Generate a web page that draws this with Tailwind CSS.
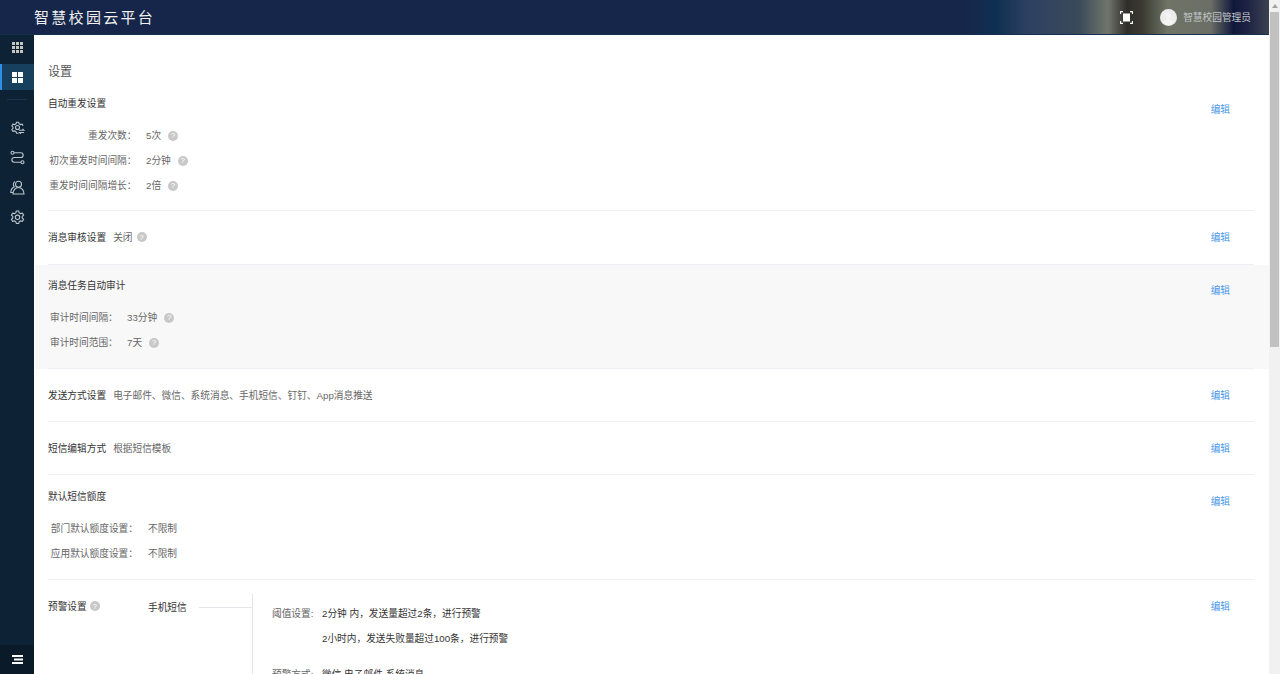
<!DOCTYPE html>
<html lang="zh">
<head>
<meta charset="utf-8">
<script src="https://cdn.jsdelivr.net/npm/@tailwindcss/browser@4"></script>
</head>
<body class="h-[674px] w-[1280px] overflow-hidden bg-white font-['Liberation_Sans','Noto_Sans_CJK_SC',sans-serif] text-[9.7px] leading-[15px] whitespace-nowrap text-[#666]">
<div class="flex h-[674px]">
  <div class="flex w-[1269px] shrink-0 flex-col">
    <header class="flex h-[35px] shrink-0 items-center justify-between border-b border-[#14304f] bg-[linear-gradient(90deg,#16264a_0%,#16264a_76%,#0e3050_78.5%,#2d4062_81%,#3a4a5a_85%,#70756a_87.3%,#302e2a_88.8%,#3a3a30_90%,#6f7466_92%,#6a6e66_95.4%,#10183a_97.2%,#1d2344_98.3%,#3a4250_100%)] pl-[34px] pr-[18px]">
      <div class="text-[15px] leading-[35px] tracking-[2.3px] text-[#f0f0f0]">智慧校园云平台</div>
      <div class="flex items-center">
        <svg class="mr-[27px] h-[13px] w-[13px]" viewBox="0 0 13 13" fill="none" stroke="#fff" stroke-width="1.1"><path d="M.6 3V.6H3M10 .6h2.4V3M12.400 10v2.400H10M3 12.400H.6V10"/><rect x="3" y="2.500" width="7" height="8" fill="#fff" stroke="none"/></svg>
        <svg class="mr-[6px] h-[17px] w-[17px]" viewBox="0 0 17 17"><circle cx="8.500" cy="8.500" r="8.500" fill="#ececec"/><circle cx="8.500" cy="6.800" r="2.800" fill="#f4f4f4"/><path d="M3.500 14c.6-3 2.500-4 5-4s4.400 1 5 4a8 8 0 01-10 0z" fill="#f4f4f4"/></svg>
        <span class="text-[#c2c5c8]">智慧校园管理员</span>
      </div>
    </header>
    <div class="flex min-h-0 flex-1">
      <aside class="flex w-[34px] shrink-0 flex-col bg-[#0e2235]">
        <div class="flex h-[24px] items-center justify-center">
          <svg class="h-[11px] w-[11px]" viewBox="0 0 11 11" fill="#c4c6bf"><path d="M0 0h3v3H0zM4 0h3v3H4zM8 0h3v3H8zM0 4h3v3H0zM4 4h3v3H4zM8 4h3v3H8zM0 8h3v3H0zM4 8h3v3H4zM8 8h3v3H8z"/></svg>
        </div>
        <div class="mt-[5px] flex h-[26px] items-center justify-center border-l-2 border-[#2f8fe6] bg-[#17405f] pr-[2px]">
          <svg class="h-[11px] w-[11px]" viewBox="0 0 11 11" fill="#fff"><path d="M0 0h5v5H0zM6 0h5v5H6zM0 6h5v5H0zM6 6h5v5H6z"/></svg>
        </div>
        <div class="mx-[7px] mb-[20px] mt-[9px] h-px bg-[#1d3347]"></div>
        <div class="flex flex-col items-center gap-[15px] text-[#b9c4cb]">
          <svg class="h-[15px] w-[15px]" viewBox="0 0 15 15" fill="none" stroke="currentColor" stroke-width="1.1"><path d="M8.500 13.200H6.600l-.6-1.500-1.500-.8-1.600.4-1-1.700 1.100-1.200V7.100L1.900 5.900l1-1.700 1.600.4L6 3.800l.6-1.500h2l.6 1.500 1.400.8 1.600-.4.900 1.500"/><circle cx="7.500" cy="7.500" r="2"/><path d="M9 10.200h5l-1.500-1.400M14 12.500H9.500l1.500 1.400"/></svg>
          <svg class="h-[15px] w-[15px]" viewBox="0 0 15 15" fill="none" stroke="currentColor" stroke-width="1.1"><circle cx="2.500" cy="2.800" r="1.500"/><circle cx="12.500" cy="12.200" r="1.500"/><path d="M4 2.800h6.800a2.350 2.350 0 010 4.700H4.200a2.350 2.350 0 000 4.700H11"/></svg>
          <svg class="h-[15px] w-[15px]" viewBox="0 0 15 15" fill="none" stroke="currentColor" stroke-width="1.1"><circle cx="8.500" cy="4.300" r="3"/><path d="M3 14c0-3.500 2.300-6.500 5.500-6.500S14 10.500 14 14zM5 1.500C3.300 2.500 2.800 5 4.200 6.800 2 8 .8 9.800.8 12.500H3"/></svg>
          <svg class="h-[15px] w-[15px]" viewBox="0 0 15 15" fill="none" stroke="currentColor" stroke-width="1.1"><path d="M6.300 1h2.400l.5 1.900 1.300.7 1.900-.5 1.200 2-1.400 1.400v1.500l1.400 1.400-1.200 2-1.900-.5-1.300.7-.5 1.900H6.300l-.5-1.900-1.300-.7-1.900.5-1.200-2L2.800 8V6.500L1.400 5.100l1.200-2 1.900.5 1.300-.7z"/><circle cx="7.500" cy="7.300" r="2.200"/></svg>
        </div>
        <div class="mt-auto flex h-[29px] items-center justify-center bg-[#0a1a29]">
          <svg class="h-[9px] w-[11px]" viewBox="0 0 11 9" fill="#fff"><path d="M0 0h11v2H0zM2 3.500h9v2H2zM0 7h11v2H0z"/></svg>
        </div>
      </aside>
      <main class="min-w-0 flex-1 overflow-hidden">
        <h1 class="ml-[14px] mt-[29px] text-[12px] leading-[16px] font-normal text-[#555]">设置</h1>

        <section class="ml-[14px] flex h-[131px] w-[1206px] justify-between border-b border-[#edf0f5] pt-[16px]">
          <div>
            <h2 class="text-[#333]">自动重发设置</h2>
            <dl class="mt-[12px]">
              <div class="flex h-[25px] items-center"><dt class="w-[88.500px] text-right">重发次数：</dt><dd class="ml-[9.500px]">5次</dd><i class="ml-[7px] flex h-[10px] w-[10px] items-center justify-center rounded-full bg-[#c8c8c8] text-[8px] not-italic text-white">?</i></div>
              <div class="flex h-[25px] items-center"><dt class="w-[88.500px] text-right">初次重发时间间隔：</dt><dd class="ml-[9.500px]">2分钟</dd><i class="ml-[7px] flex h-[10px] w-[10px] items-center justify-center rounded-full bg-[#c8c8c8] text-[8px] not-italic text-white">?</i></div>
              <div class="flex h-[25px] items-center"><dt class="w-[88.500px] text-right">重发时间间隔增长：</dt><dd class="ml-[9.500px]">2倍</dd><i class="ml-[7px] flex h-[10px] w-[10px] items-center justify-center rounded-full bg-[#c8c8c8] text-[8px] not-italic text-white">?</i></div>
            </dl>
          </div>
          <a class="mr-[24px] mt-[6px] text-[#4a98e8]">编辑</a>
        </section>

        <section class="ml-[14px] flex h-[54px] w-[1206px] items-center justify-between border-b border-[#edf0f5] pb-[1px]">
          <div class="flex items-center"><h2 class="text-[#333]">消息审核设置</h2><span class="ml-[7px]">关闭</span><i class="ml-[4px] flex h-[10px] w-[10px] items-center justify-center rounded-full bg-[#c8c8c8] text-[8px] not-italic text-white">?</i></div>
          <a class="mr-[24px] text-[#4a98e8]">编辑</a>
        </section>

        <section class="ml-px w-[1234px] bg-[#f8f8f8] pl-[13px]">
          <div class="flex h-[104px] w-[1206px] justify-between border-b border-[#edf0f5] pt-[13px]">
            <div>
              <h2 class="text-[#333]">消息任务自动审计</h2>
              <dl class="ml-[2px] mt-[12px]">
                <div class="flex h-[25px] items-center"><dt class="w-[68px]">审计时间间隔：</dt><dd class="ml-[9px]">33分钟</dd><i class="ml-[7px] flex h-[10px] w-[10px] items-center justify-center rounded-full bg-[#c8c8c8] text-[8px] not-italic text-white">?</i></div>
                <div class="flex h-[25px] items-center"><dt class="w-[68px]">审计时间范围：</dt><dd class="ml-[9px]">7天</dd><i class="ml-[7px] flex h-[10px] w-[10px] items-center justify-center rounded-full bg-[#c8c8c8] text-[8px] not-italic text-white">?</i></div>
              </dl>
            </div>
            <a class="mr-[24px] mt-[5px] text-[#4a98e8]">编辑</a>
          </div>
        </section>

        <section class="ml-[14px] flex h-[53px] w-[1206px] items-center justify-between border-b border-[#edf0f5]">
          <div class="flex items-center"><h2 class="text-[#333]">发送方式设置</h2><span class="ml-[7px]">电子邮件、微信、系统消息、手机短信、钉钉、App消息推送</span></div>
          <a class="mr-[24px] text-[#4a98e8]">编辑</a>
        </section>

        <section class="ml-[14px] flex h-[53px] w-[1206px] items-center justify-between border-b border-[#edf0f5]">
          <div class="flex items-center"><h2 class="text-[#333]">短信编辑方式</h2><span class="ml-[7px]">根据短信模板</span></div>
          <a class="mr-[24px] text-[#4a98e8]">编辑</a>
        </section>

        <section class="ml-[14px] flex h-[105px] w-[1206px] justify-between border-b border-[#edf0f5] pt-[14px]">
          <div>
            <h2 class="text-[#333]">默认短信额度</h2>
            <dl class="mt-[12px]">
              <div class="flex h-[25px] items-center"><dt class="w-[90px] text-right">部门默认额度设置：</dt><dd class="ml-[10px]">不限制</dd></div>
              <div class="flex h-[25px] items-center"><dt class="w-[90px] text-right">应用默认额度设置：</dt><dd class="ml-[10px]">不限制</dd></div>
            </dl>
          </div>
          <a class="mr-[24px] mt-[5px] text-[#4a98e8]">编辑</a>
        </section>

        <section class="ml-[14px] flex w-[1206px] justify-between pt-[19px]">
          <div class="flex">
            <div class="flex w-[100px] items-start"><h2 class="text-[#333]">预警设置</h2><i class="ml-[3px] mt-[2px] flex h-[10px] w-[10px] items-center justify-center rounded-full bg-[#c8c8c8] text-[8px] not-italic text-white">?</i></div>
            <div class="mt-px flex h-[15px] w-[104px] items-center"><span class="text-[#333]">手机短信</span><div class="ml-[12px] h-px w-[54px] bg-[#e3e6ea]"></div></div>
            <div class="-mt-[5px] w-px self-stretch bg-[#e3e6ea]"></div>
            <dl class="ml-[19px] mt-[7px] text-[#333]">
              <div class="flex h-[25px]"><dt class="w-[50px] text-[#666]">阈值设置:</dt><dd>2分钟 内，发送量超过2条，进行预警</dd></div>
              <div class="flex h-[25px]"><dt class="w-[50px]"></dt><dd>2小时内，发送失败量超过100条，进行预警</dd></div>
              <div class="mt-[11px] flex h-[25px]"><dt class="w-[50px] text-[#666]">预警方式:</dt><dd>微信 电子邮件 系统消息</dd></div>
            </dl>
          </div>
          <a class="mr-[24px] text-[#4a98e8]">编辑</a>
        </section>
      </main>
    </div>
  </div>
  <div class="flex w-[11px] shrink-0 flex-col items-center bg-[#f1f1f1]">
    <div class="flex h-[12px] items-center justify-center"><div class="h-0 w-0 border-x-[3px] border-b-[4px] border-x-transparent border-b-[#a3a3a3]"></div></div>
    <div class="h-[335px] w-[9.500px] bg-[#c1c1c1]"></div>
  </div>
</div>
</body>
</html>
